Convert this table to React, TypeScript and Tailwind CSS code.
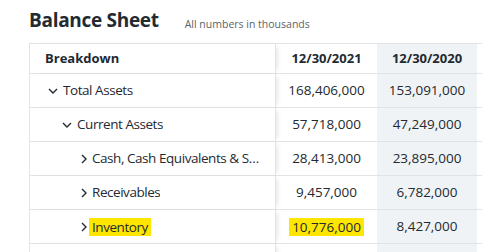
import React from "react";

const font = { fontFamily: '"Open Sans", "Noto Sans", sans-serif' };

function ChevDown() {
  return (
    <svg width="10" height="6" viewBox="0 0 10 6" className="shrink-0">
      <path d="M1 1 L5 5 L9 1" fill="none" stroke="#232a31" strokeWidth="1.4" />
    </svg>
  );
}
function ChevRight() {
  return (
    <svg width="6" height="10" viewBox="0 0 6 10" className="shrink-0 ml-[4px]">
      <path d="M1 1 L5 5 L1 9" fill="none" stroke="#232a31" strokeWidth="1.4" />
    </svg>
  );
}

type Row = { label: string; level: number; open: boolean; a: string; b: string; hl?: boolean };

const rows: Row[] = [
  { label: "Total Assets", level: 0, open: true, a: "168,406,000", b: "153,091,000" },
  { label: "Current Assets", level: 1, open: true, a: "57,718,000", b: "47,249,000" },
  { label: "Cash, Cash Equivalents & Short Term Investments", level: 2, open: false, a: "28,413,000", b: "23,895,000" },
  { label: "Receivables", level: 2, open: false, a: "9,457,000", b: "6,782,000" },
  { label: "Inventory", level: 2, open: false, a: "10,776,000", b: "8,427,000", hl: true },
  { label: "", level: 2, open: false, a: "", b: "" },
];

const padL = ["pl-[18px]", "pl-[32px]", "pl-[47px]"];

export default function App() {
  return (
    <div className="w-[482px] h-[252px] overflow-hidden bg-white text-[#232a31]" style={font}>
      <div className="flex items-end pl-[29px] pt-[6px] h-[43px] pb-[10px]">
        <h1 className="text-[19px] font-bold leading-[26px] tracking-[-0.3px]">Balance Sheet</h1>
        <span className="ml-[26px] text-[10.5px] leading-[16px] text-[#5b636a] mb-[1px] whitespace-nowrap">All numbers in thousands</span>
      </div>
      <div className="ml-[29px] border-l border-t border-[#e0e4e9] w-[600px]">
        <div className="flex h-[30px] border-b border-[#e0e4e9] text-[13px] font-bold">
          <div className="w-[246px] shrink-0 flex items-center pl-[15px] border-r border-[#e0e4e9] shadow-[4px_0_5px_-3px_rgba(0,0,0,0.12)] relative z-10 bg-white">Breakdown</div>
          <div className="w-[101px] shrink-0 flex items-center justify-center">12/30/2021</div>
          <div className="w-[100px] shrink-0 flex items-center justify-center bg-[#f0f3f5]">12/30/2020</div>
          <div className="flex-1" />
        </div>
        {rows.map((r, i) => (
          <div key={i} className="flex h-[34px] border-b border-[#e0e4e9] text-[13.5px]">
            <div className={`w-[246px] shrink-0 min-w-0 flex items-center ${padL[r.level]} pr-[12px] border-r border-[#e0e4e9] shadow-[4px_0_5px_-3px_rgba(0,0,0,0.12)] relative z-10 bg-white`}>
              {r.label && (
                <>
                  <span className="w-[15px] shrink-0 flex items-center">{r.open ? <ChevDown /> : <ChevRight />}</span>
                  <span className={`min-w-0 truncate tracking-[-0.45px] ${r.hl ? "bg-[#ffe600] px-[3px] -ml-[3px] leading-[17px] pt-[1px]" : ""}`}>{r.label}</span>
                </>
              )}
            </div>
            <div className="w-[101px] shrink-0 flex items-center justify-center">
              {r.a && <span className={r.hl ? "bg-[#ffe600] px-[3px] leading-[17px] pt-[1px]" : ""}>{r.a}</span>}
            </div>
            <div className="w-[100px] shrink-0 flex items-center justify-center bg-[#f0f3f5]">{r.b}</div>
            <div className="flex-1" />
          </div>
        ))}
      </div>
    </div>
  );
}
